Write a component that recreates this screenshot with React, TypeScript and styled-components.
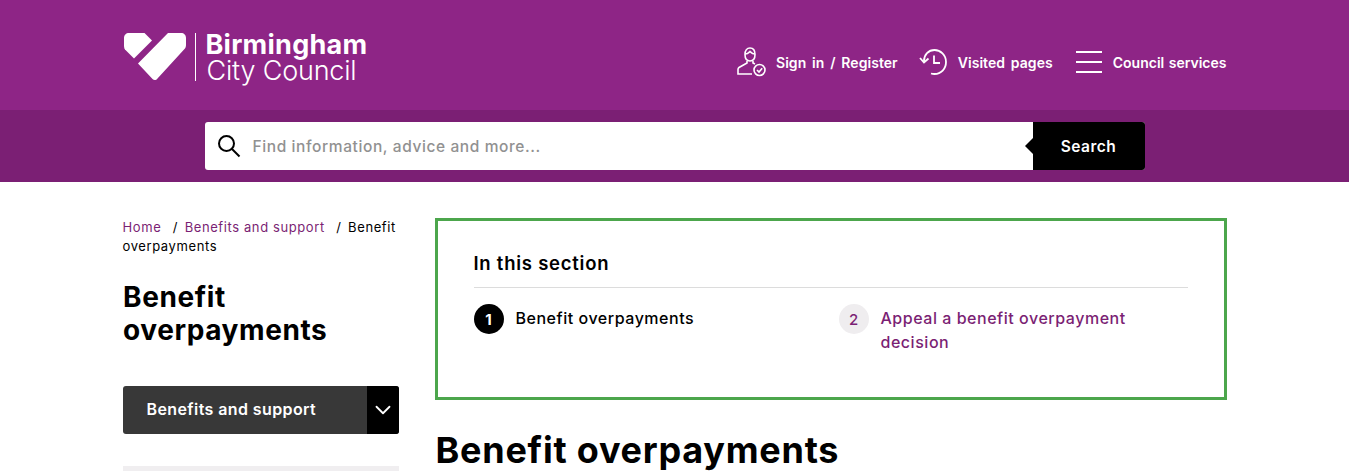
import React from "react";
import styled, { createGlobalStyle } from "styled-components";
import { ChevronDown } from "lucide-react";

const FONT = `Inter, "Liberation Sans", Arial, sans-serif`;

const GlobalStyle = createGlobalStyle`
	html, body {
		margin: 0;
		padding: 0;
		height: 471px;
		overflow: hidden;
		background: #fff;
		font-family: ${FONT};
		color: #000;
	}
	* {
		box-sizing: border-box;
	}
`;

const Wrap = styled.div`
	width: 1104px;
	margin: 0 auto;
`;

const Header = styled.header`
	background: #8e2586;
	height: 110px;
`;

const HeaderRow = styled(Wrap)`
	height: 110px;
	display: flex;
	justify-content: space-between;
`;

const Logo = styled.a`
	display: flex;
	align-items: center;
	height: 48px;
	margin: 33px 0 0 1px;
	color: #fff;
`;

const LogoRule = styled.div`
	width: 1px;
	height: 48px;
	background: #fff;
	margin: 0 10px 0 9px;
`;

const LogoText = styled.div`
	display: flex;
	flex-direction: column;
	padding-top: 1px;
`;

const LogoTop = styled.span`
	font-size: 27px;
	line-height: 26px;
	font-weight: 700;
	letter-spacing: 0.25px;
`;

const LogoBottom = styled.span`
	font-size: 27px;
	line-height: 26px;
	font-weight: 300;
	letter-spacing: -0.2px;
	padding-left: 1px;
`;

const HeaderNav = styled.nav`
	display: flex;
	align-items: center;
	gap: 21px;
	padding-top: 14px;
`;

const NavItem = styled.a<{ $tight?: boolean }>`
	display: flex;
	align-items: center;
	gap: 9px;
	color: #fff;
	font-size: 14px;
	font-weight: 600;
	letter-spacing: ${(p) => (p.$tight ? "0" : "0.05px")};
	word-spacing: ${(p) => (p.$tight ? "1px" : "2.2px")};
	white-space: nowrap;
`;

const MenuSvg = styled.svg`
	margin: 0 2px;
`;

const SearchBand = styled.div`
	background: #7b1f74;
	height: 72px;
	display: flex;
	justify-content: center;
	padding-top: 12px;
`;

const SearchBox = styled.div`
	width: 940px;
	height: 48px;
	display: flex;
	border-radius: 3px;
	background: #fff;
`;

const SearchField = styled.div`
	flex: 1;
	display: flex;
	align-items: center;
	padding-left: 12px;
	gap: 12px;
`;

const Placeholder = styled.span`
	color: #919191;
	font-size: 15.5px;
	font-weight: 500;
	letter-spacing: 0.6px;
`;

const SearchButton = styled.div`
	position: relative;
	width: 112px;
	background: #000;
	border-radius: 0 3px 3px 0;
	color: #fff;
	font-size: 15.5px;
	font-weight: 600;
	letter-spacing: 0.5px;
	display: flex;
	align-items: center;
	justify-content: center;
	&::before {
		content: "";
		position: absolute;
		left: -8px;
		top: 16px;
		border-top: 8px solid transparent;
		border-bottom: 8px solid transparent;
		border-right: 8px solid #000;
	}
`;

const Content = styled(Wrap)`
	display: grid;
	grid-template-columns: 276px 792px;
	column-gap: 36px;
	padding-top: 36px;
`;

const Breadcrumb = styled.div`
	font-size: 13px;
	line-height: 19px;
	letter-spacing: 0.6px;
`;

const Crumb = styled.a`
	color: #7b1f74;
`;

const Slash = styled.span`
	margin: 0 6.5px 0 11.5px;
`;

const SideTitle = styled.h2`
	font-size: 28px;
	line-height: 33px;
	font-weight: 700;
	letter-spacing: 0.6px;
	margin: 25px 0 39px;
	padding-left: 0.5px;
`;

const SideMenu = styled.div`
	display: flex;
	height: 48px;
	border-radius: 3px;
	overflow: hidden;
	background: #383838;
	color: #fff;
`;

const SideMenuLabel = styled.div`
	flex: 1;
	display: flex;
	align-items: center;
	padding: 0 0 2px 24px;
	font-size: 16px;
	font-weight: 600;
	letter-spacing: 0.4px;
`;

const SideMenuToggle = styled.div`
	width: 32px;
	background: #000;
	display: flex;
	align-items: center;
	justify-content: center;
`;

const SideNext = styled.div`
	height: 20px;
	margin-top: 32px;
	background: #f0eef0;
`;

const SectionBox = styled.section`
	border: 3px solid #4ca64c;
	height: 182px;
	padding: 28px 36px 0;
`;

const SectionTitle = styled.div`
	font-size: 18.5px;
	line-height: 28px;
	font-weight: 600;
	letter-spacing: 0.75px;
	padding-bottom: 10px;
	border-bottom: 1px solid #dcdcdc;
`;

const Steps = styled.div`
	display: grid;
	grid-template-columns: 365px 1fr;
	padding-top: 16px;
`;

const Step = styled.div`
	display: flex;
	gap: 12px;
`;

const StepNumber = styled.span<{ $active?: boolean }>`
	flex: none;
	width: 30px;
	height: 30px;
	border-radius: 50%;
	display: flex;
	align-items: center;
	justify-content: center;
	font-size: 15px;
	font-weight: ${(p) => (p.$active ? 700 : 500)};
	background: ${(p) => (p.$active ? "#000" : "#efedef")};
	color: ${(p) => (p.$active ? "#fff" : "#7b1f74")};
`;

const StepLabel = styled.span<{ $active?: boolean }>`
	font-size: 16px;
	line-height: 24px;
	font-weight: 500;
	letter-spacing: 0.53px;
	padding-top: 2px;
	max-width: 270px;
	color: ${(p) => (p.$active ? "#000" : "#7b1f74")};
`;

const PageTitle = styled.h1`
	font-size: 36px;
	line-height: 42px;
	font-weight: 700;
	letter-spacing: 0.75px;
	margin: 29px 0 0;
	padding-left: 1px;
`;

const LogoMark = () => (
	<svg width="62" height="48" viewBox="0 0 62 48" fill="#fff">
		<path d="M5 0H20.500L28 7.500 10 25.500 1.500 17C.5 16 0 14.500 0 13V5C0 2 2 0 5 0Z" />
		<path d="M45 0H57C60 0 62 2 62 5V12C62 13.500 61.500 15 60.500 16L33.500 45.500C32 47.500 30 47.500 28.500 46L14 30.500 44 0Z" />
	</svg>
);

const UserIcon = () => (
	<svg width="30" height="30" viewBox="0 0 30 30" fill="none" stroke="#fff" strokeWidth="1.6">
		<path d="M8 7.500C8 3.500 10 1 13 1S18 3.500 18 7.500 16 14 13 14 8 11.500 8 7.500Z" />
		<path d="M8 7C11 7 12 5.500 13 4.500 14 5.500 15 7 18 7" />
		<path d="M10 14V16L2 20.500C1.300 21 1 21.500 1 22.500V27H15" />
		<path d="M16 14V16L18 17" />
		<circle cx="22.500" cy="23" r="5.500" />
		<path d="M20 23L22 25 25.200 21.200" />
	</svg>
);

const HistoryIcon = () => (
	<svg width="30" height="28" viewBox="0 0 30 28" fill="none" stroke="#fff" strokeWidth="1.8">
		<path d="M5 13C5 6.500 9.500 2 15.500 2S27 7 27 14 22 26 15.500 26C14 26 13 25.800 12 25.500" />
		<path d="M1 10L5 14.500 9.500 10.500" />
		<path d="M15 7.500V15H21" />
	</svg>
);

const MenuIcon = () => (
	<MenuSvg width="26" height="22" viewBox="0 0 26 22" stroke="#fff" strokeWidth="2">
		<path d="M0 1H26M0 11H26M0 21H26" />
	</MenuSvg>
);

const SearchIcon = () => (
	<svg width="24" height="24" viewBox="0 0 24 24" fill="none" stroke="#000" strokeWidth="2">
		<circle cx="9.500" cy="9.500" r="7.500" />
		<path d="M15 15L22.500 22.500" />
	</svg>
);

export default function App(): JSX.Element {
	return (
		<>
			<GlobalStyle />
			<Header>
				<HeaderRow>
					<Logo>
						<LogoMark />
						<LogoRule />
						<LogoText>
							<LogoTop>Birmingham</LogoTop>
							<LogoBottom>City Council</LogoBottom>
						</LogoText>
					</Logo>
					<HeaderNav>
						<NavItem>
							<UserIcon />
							Sign in / Register
						</NavItem>
						<NavItem>
							<HistoryIcon />
							Visited pages
						</NavItem>
						<NavItem $tight>
							<MenuIcon />
							Council services
						</NavItem>
					</HeaderNav>
				</HeaderRow>
			</Header>
			<SearchBand>
				<SearchBox>
					<SearchField>
						<SearchIcon />
						<Placeholder>Find information, advice and more...</Placeholder>
					</SearchField>
					<SearchButton>Search</SearchButton>
				</SearchBox>
			</SearchBand>
			<Content>
				<aside>
					<Breadcrumb>
						<Crumb>Home</Crumb>
						<Slash>/</Slash>
						<Crumb>Benefits and support</Crumb>
						<Slash>/</Slash>
						<span>Benefit</span> <span>overpayments</span>
					</Breadcrumb>
					<SideTitle>Benefit overpayments</SideTitle>
					<SideMenu>
						<SideMenuLabel>Benefits and support</SideMenuLabel>
						<SideMenuToggle>
							<ChevronDown size={26} strokeWidth={1.7} color="#fff" />
						</SideMenuToggle>
					</SideMenu>
					<SideNext />
				</aside>
				<main>
					<SectionBox>
						<SectionTitle>In this section</SectionTitle>
						<Steps>
							<Step>
								<StepNumber $active>1</StepNumber>
								<StepLabel $active>Benefit overpayments</StepLabel>
							</Step>
							<Step>
								<StepNumber>2</StepNumber>
								<StepLabel>Appeal a benefit overpayment decision</StepLabel>
							</Step>
						</Steps>
					</SectionBox>
					<PageTitle>Benefit overpayments</PageTitle>
				</main>
			</Content>
		</>
	);
}
